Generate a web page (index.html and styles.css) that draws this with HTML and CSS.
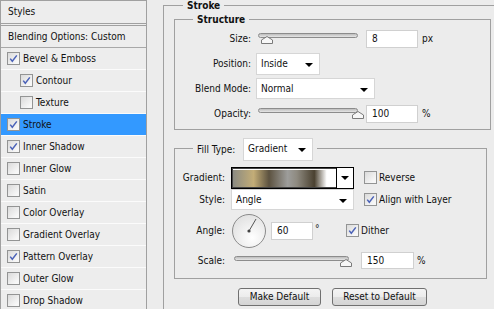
FILE: index.html
```html
<!DOCTYPE html>
<html lang="en">
<head>
    <meta charset="UTF-8">
    <title>Layer Style - Stroke</title>
    <link rel="stylesheet" href="styles.css">
</head>
<body>
    <div class="layer-style">
        <div class="styles-panel">
            <div class="panel-head">Styles</div>
            <div class="panel-row blend">Blending Options: Custom</div>
            <div class="panel-row"><span class="cb on"><svg viewBox="0 0 11 11"><path d="M2.2 5.6 L4.3 8.2 L8.8 2.4"/></svg></span>Bevel &amp; Emboss</div>
            <div class="panel-row sub"><span class="cb on"><svg viewBox="0 0 11 11"><path d="M2.2 5.6 L4.3 8.2 L8.8 2.4"/></svg></span>Contour</div>
            <div class="panel-row sub"><span class="cb"></span>Texture</div>
            <div class="panel-row active"><span class="cb on"><svg viewBox="0 0 11 11"><path d="M2.2 5.6 L4.3 8.2 L8.8 2.4"/></svg></span>Stroke</div>
            <div class="panel-row"><span class="cb on"><svg viewBox="0 0 11 11"><path d="M2.2 5.6 L4.3 8.2 L8.8 2.4"/></svg></span>Inner Shadow</div>
            <div class="panel-row"><span class="cb"></span>Inner Glow</div>
            <div class="panel-row"><span class="cb"></span>Satin</div>
            <div class="panel-row"><span class="cb"></span>Color Overlay</div>
            <div class="panel-row"><span class="cb"></span>Gradient Overlay</div>
            <div class="panel-row"><span class="cb on"><svg viewBox="0 0 11 11"><path d="M2.2 5.6 L4.3 8.2 L8.8 2.4"/></svg></span>Pattern Overlay</div>
            <div class="panel-row"><span class="cb"></span>Outer Glow</div>
            <div class="panel-row"><span class="cb"></span>Drop Shadow</div>
        </div>

        <div class="settings">
            <fieldset class="group stroke">
                <legend>Stroke</legend>

                <fieldset class="group structure">
                    <legend>Structure</legend>
                    <div class="field">
                        <span class="field-label">Size:</span>
                        <div class="slider size-slider">
                            <div class="track"></div>
                            <svg class="thumb" style="left:9px" viewBox="0 0 12 8"><path d="M0.5 7.5 L0.5 4 L6 0.5 L11.5 4 L11.5 7.5 Z"/></svg>
                        </div>
                        <span class="input">8</span>
                        <span class="unit">px</span>
                    </div>
                    <div class="field">
                        <span class="field-label">Position:</span>
                        <span class="select position-select">Inside</span>
                    </div>
                    <div class="field">
                        <span class="field-label">Blend Mode:</span>
                        <span class="select blend-select">Normal</span>
                    </div>
                    <div class="field">
                        <span class="field-label">Opacity:</span>
                        <div class="slider size-slider">
                            <div class="track"></div>
                            <svg class="thumb" style="left:100px" viewBox="0 0 12 8"><path d="M0.5 7.5 L0.5 4 L6 0.5 L11.5 4 L11.5 7.5 Z"/></svg>
                        </div>
                        <span class="input">100</span>
                        <span class="unit">%</span>
                    </div>
                </fieldset>

                <fieldset class="group fill">
                    <legend><span class="legend-label">Fill Type:</span><span class="select fill-select">Gradient</span></legend>
                    <div class="field tight">
                        <span class="field-label">Gradient:</span>
                        <div class="gradient-picker">
                            <div class="gradient-swatch"></div>
                            <div class="gradient-drop"></div>
                        </div>
                        <span class="cb check-gap"></span>
                        <span class="check-text">Reverse</span>
                    </div>
                    <div class="field tight">
                        <span class="field-label">Style:</span>
                        <span class="select style-select">Angle</span>
                        <span class="cb on check-gap"><svg viewBox="0 0 11 11"><path d="M2.2 5.6 L4.3 8.2 L8.8 2.4"/></svg></span>
                        <span class="check-text">Align with Layer</span>
                    </div>
                    <div class="field angle-row">
                        <span class="field-label">Angle:</span>
                        <svg class="dial" viewBox="0 0 34 34">
                            <defs>
                                <radialGradient id="dialFill" cx="0.6" cy="0.7" r="0.7">
                                    <stop offset="0" stop-color="#ffffff"/>
                                    <stop offset="1" stop-color="#e2e2e2"/>
                                </radialGradient>
                            </defs>
                            <circle cx="17" cy="17" r="16.5" fill="url(#dialFill)" stroke="#8a8a8a"/>
                            <line x1="17" y1="17" x2="24" y2="5" stroke="#555" stroke-width="1"/>
                            <circle cx="17" cy="17" r="1.6" fill="#444"/>
                        </svg>
                        <span class="input angle-input">60</span>
                        <span class="deg">°</span>
                        <span class="cb on dither-gap"><svg viewBox="0 0 11 11"><path d="M2.2 5.6 L4.3 8.2 L8.8 2.4"/></svg></span>
                        <span class="check-text">Dither</span>
                    </div>
                    <div class="field scale-row">
                        <span class="field-label">Scale:</span>
                        <div class="slider scale-slider">
                            <div class="track"></div>
                            <svg class="thumb" style="left:112px" viewBox="0 0 12 8"><path d="M0.5 7.5 L0.5 4 L6 0.5 L11.5 4 L11.5 7.5 Z"/></svg>
                        </div>
                        <span class="input scale-input">150</span>
                        <span class="unit">%</span>
                    </div>
                </fieldset>

                <div class="buttons">
                    <button class="btn make-default">Make Default</button>
                    <button class="btn reset-default">Reset to Default</button>
                </div>
            </fieldset>
        </div>
    </div>
</body>
</html>
```

FILE: styles.css
```css
* {
    box-sizing: border-box;
}
html, body {
    margin: 0;
    height: 100%;
    overflow: hidden;
}
body {
    font-family: "DejaVu Sans Condensed", "DejaVu Sans", sans-serif;
    font-stretch: condensed;
    font-size: 10px;
    background-color: #ececec;
    color: #111;
}
.layer-style {
    display: flex;
    height: 309px;
    overflow: hidden;
}

/* left list of effects */
.styles-panel {
    width: 147px;
    flex: none;
    overflow: hidden;
    border: 1px solid #a0a0a0;
    border-bottom: none;
    background: #ededed;
}
.panel-head {
    height: 25px;
    line-height: 22px;
    padding-left: 7px;
    border-bottom: 3px double #a0a0a0;
}
.panel-row {
    display: flex;
    align-items: center;
    height: 22px;
    padding-left: 6px;
    border-bottom: 1px solid #fbfbfb;
}
.panel-row.blend {
    padding-left: 7px;
    border-bottom-color: #a8a8a8;
}
.panel-row.sub {
    padding-left: 19px;
}
.panel-row.active {
    background: #3399ff;
}
.cb {
    width: 13px;
    height: 13px;
    flex: none;
    margin-right: 3px;
    border: 1px solid #939494;
    background: linear-gradient(135deg, #dadada, #f7f7f7 80%);
    display: inline-flex;
    align-items: center;
    justify-content: center;
}
.cb svg {
    width: 11px;
    height: 11px;
}
.cb svg path {
    fill: none;
    stroke: #4b62b8;
    stroke-width: 1.5;
}

/* right settings */
.settings {
    flex: 1;
    min-width: 0;
    padding-left: 16px;
}
.group {
    margin: 0;
    padding: 0;
    min-width: 0;
    border: 1px solid #a0a0a0;
}
.group > legend {
    padding: 0 4px;
    line-height: 11px;
}
.stroke {
    height: 309px;
    padding-left: 10px;
    border-right: none;
    border-bottom: none;
}
.stroke > legend {
    margin-left: 9px;
    font-weight: bold;
}
.structure {
    width: 317px;
    margin-top: 3px;
    padding: 1px 0 3px;
}
.structure > legend {
    margin-left: 18px;
    font-weight: bold;
}
.field {
    display: flex;
    align-items: center;
    height: 25px;
}
.field.tight {
    height: 22px;
}
.field-label {
    width: 76px;
    flex: none;
    margin-right: 5px;
    text-align: right;
}
.input {
    width: 52px;
    height: 18px;
    flex: none;
    padding-left: 5px;
    line-height: 16px;
    background: #fff;
    border: 1px solid #d0d0d0;
}
.unit {
    margin-left: 4px;
}
.select {
    position: relative;
    display: inline-block;
    height: 22px;
    flex: none;
    padding-left: 4px;
    line-height: 20px;
    background: #fff;
    border: 1px solid #d6d6d6;
}
.select::after {
    content: "";
    position: absolute;
    right: 6px;
    top: 9px;
    border-left: 4px solid transparent;
    border-right: 4px solid transparent;
    border-top: 4px solid #000;
}
.position-select {
    width: 64px;
}
.blend-select {
    width: 119px;
    height: 21px;
    line-height: 19px;
}
.slider {
    position: relative;
    height: 12px;
    flex: none;
}
.size-slider {
    width: 100px;
    margin-left: 2px;
    margin-right: 8px;
}
.slider .track {
    height: 5px;
    border: 1px solid #8c8c8c;
    border-radius: 3px;
    background: linear-gradient(#bdbdbd, #e6e6e6);
}
.slider .thumb {
    position: absolute;
    top: 3px;
    width: 12px;
    height: 8px;
    margin-left: -6px;
}
.slider .thumb path {
    fill: #f7f7f7;
    stroke: #7a7a7a;
    stroke-width: 1;
}

/* fill type group */
.fill {
    width: 313px;
    margin-top: 7px;
    padding: 6px 0 7px;
}
.fill > legend {
    margin-left: 18px;
    line-height: 23px;
}
.legend-label {
    display: inline-block;
    width: 41px;
    vertical-align: middle;
}
.fill-select {
    width: 70px;
    height: 23px;
    margin-left: 5px;
    vertical-align: middle;
}
.fill .field-label {
    width: 50px;
    margin-right: 6px;
}
.gradient-picker {
    display: flex;
    width: 123px;
    height: 22px;
    flex: none;
    border: 1px solid #000;
    box-shadow: inset 0 0 0 1px #444;
    padding: 2px 0 1px 1px;
    background: #fff;
}
.gradient-swatch {
    flex: 1;
    background: linear-gradient(90deg, #8b8b82 0%, #c3ad77 20%, #5c5240 35%, #9d9d9b 53%, #8e8a80 62%, #4a4130 79%, #ffffff 91%, #ffffff 100%);
}
.gradient-drop {
    position: relative;
    width: 17px;
    margin: -2px 0 -1px;
    border-left: 1px solid #000;
    background: #fff;
}
.gradient-drop::after {
    content: "";
    position: absolute;
    left: 4px;
    top: 8px;
    border-left: 4px solid transparent;
    border-right: 4px solid transparent;
    border-top: 4px solid #000;
}
.check-gap {
    margin-left: 10px;
    margin-right: 2px;
}
.style-select {
    width: 123px;
    height: 21px;
    line-height: 19px;
}
.angle-row {
    height: 40px;
}
.dial {
    width: 34px;
    height: 34px;
    flex: none;
    margin-left: 1px;
}
.angle-input {
    width: 42px;
    margin-left: 5px;
}
.deg {
    width: 8px;
    margin-left: 2px;
    margin-top: -4px;
}
.dither-gap {
    margin-left: 23px;
    margin-right: 2px;
}
.scale-row {
    height: 20px;
}
.scale-slider {
    width: 115px;
    margin-left: 3px;
    margin-right: 12px;
    margin-top: 2px;
}
.scale-input {
    width: 53px;
    height: 17px;
    line-height: 15px;
}
.scale-row .unit {
    margin-left: 3px;
}

/* bottom buttons */
.buttons {
    display: flex;
    justify-content: center;
    gap: 11px;
    width: 313px;
    margin-top: 9px;
    padding-left: 4px;
}
.btn {
    height: 18px;
    padding: 0;
    font: inherit;
    color: #111;
    border: 1px solid #707070;
    border-radius: 3px;
    background: linear-gradient(#f4f4f4, #ececec 50%, #dedede 50%, #d4d4d4);
}
.make-default {
    width: 83px;
}
.reset-default {
    width: 95px;
}
```
